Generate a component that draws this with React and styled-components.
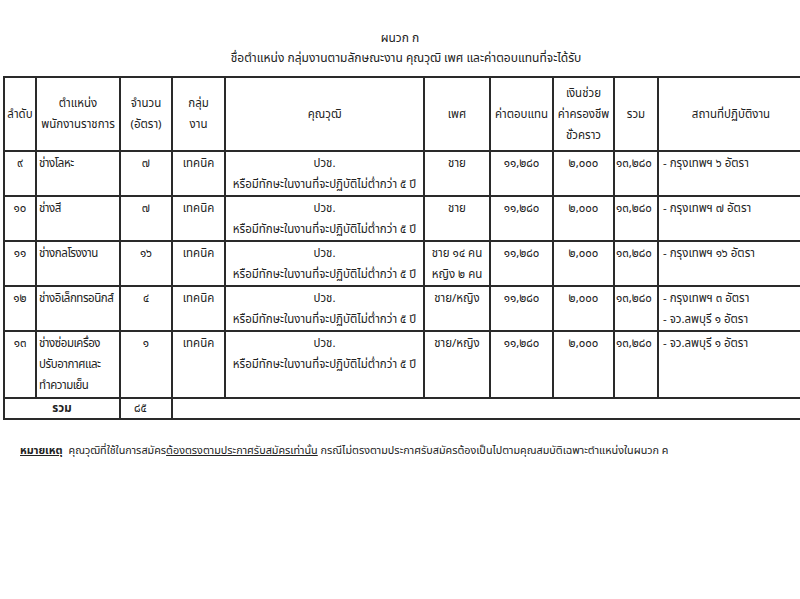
import React from "react";
import styled, { createGlobalStyle } from "styled-components";

const Global = createGlobalStyle`
  html, body { margin: 0; padding: 0; background: #fff; }
  body { font-family: "Noto Sans Thai", "Tahoma", "DejaVu Sans", "Noto Sans", sans-serif; color: #222; }
`;

const Page = styled.div`
  width: 800px;
  height: 599px;
  overflow: hidden;
  background: #fff;
  padding-top: 28px;
  box-sizing: border-box;
`;

const Title = styled.div`
  text-align: center;
  font-size: 12px;
  line-height: 20px;
  padding-left: ${(p) => p.$shift || 0}px;
`;

const Table = styled.table`
  margin-top: 8px;
  margin-left: 3px;
  width: 800px;
  border-collapse: collapse;
  table-layout: fixed;
  font-size: 11.5px;
  line-height: 21px;
`;

const Th = styled.th`
  border: 2px solid #2a2a2a;
  font-weight: normal;
  text-align: center;
  vertical-align: middle;
  height: 72px;
  padding: 0 2px;
  white-space: nowrap;
`;

const Td = styled.td`
  border: 2px solid #2a2a2a;
  vertical-align: top;
  text-align: ${(p) => p.$align || "center"};
  padding: 1px ${(p) => p.$pad ?? 2}px 0;
  white-space: nowrap;
  overflow: hidden;
  letter-spacing: ${(p) => (p.$tight ? "-0.45px" : "normal")};
  font-weight: ${(p) => (p.$bold ? "bold" : "normal")};
`;

const TallRow = styled.tr`
  td { padding-bottom: ${(p) => p.$extra || 0}px; }
`;

const TotalRow = styled.tr`
  line-height: 18px;
`;

const Note = styled.p`
  margin: 23px 0 0 20px;
  font-size: 10.8px;
  line-height: 16px;
`;

const NoteLabel = styled.span`
  font-weight: bold;
  text-decoration: underline;
  margin-right: 6px;
`;

const U = styled.span`
  text-decoration: underline;
`;

const widths = [32, 84, 52, 53, 199, 66, 63, 61, 44, 146];

const rows = [
  { no: "๙", pos: ["ช่างโลหะ"], n: "๗", sex: ["ชาย"], place: ["- กรุงเทพฯ ๖ อัตรา"] },
  { no: "๑๐", pos: ["ช่างสี"], n: "๗", sex: ["ชาย"], place: ["- กรุงเทพฯ ๗ อัตรา"] },
  { no: "๑๑", pos: ["ช่างกลโรงงาน"], n: "๑๖", sex: ["ชาย ๑๔ คน", "หญิง ๒ คน"], place: ["- กรุงเทพฯ ๑๖ อัตรา"] },
  { no: "๑๒", pos: ["ช่างอิเล็กทรอนิกส์"], n: "๔", sex: ["ชาย/หญิง"], place: ["- กรุงเทพฯ ๓ อัตรา", "- จว.ลพบุรี ๑ อัตรา"] },
  { no: "๑๓", pos: ["ช่างซ่อมเครื่อง", "ปรับอากาศและ", "ทำความเย็น"], n: "๑", sex: ["ชาย/หญิง"], place: ["- จว.ลพบุรี ๑ อัตรา"], extra: 1 },
];

const Lines = ({ items }) =>
  items.map((t, i) => (
    <React.Fragment key={i}>
      {i > 0 && <br />}
      {t}
    </React.Fragment>
  ));

export default function App() {
  return (
    <Page>
      <Global />
      <Title>ผนวก ก</Title>
      <Title $shift={12}>ชื่อตำแหน่ง กลุ่มงานตามลักษณะงาน คุณวุฒิ เพศ และค่าตอบแทนที่จะได้รับ</Title>
      <Table>
        <colgroup>
          {widths.map((w, i) => (
            <col key={i} style={{ width: w }} />
          ))}
        </colgroup>
        <thead>
          <tr>
            <Th>ลำดับ</Th>
            <Th>ตำแหน่ง<br />พนักงานราชการ</Th>
            <Th>จำนวน<br />(อัตรา)</Th>
            <Th>กลุ่ม<br />งาน</Th>
            <Th>คุณวุฒิ</Th>
            <Th>เพศ</Th>
            <Th>ค่าตอบแทน</Th>
            <Th>เงินช่วย<br />ค่าครองชีพ<br />ชั่วคราว</Th>
            <Th>รวม</Th>
            <Th>สถานที่ปฏิบัติงาน</Th>
          </tr>
        </thead>
        <tbody>
          {rows.map((r) => (
            <TallRow key={r.no} $extra={r.extra}>
              <Td>{r.no}</Td>
              <Td $align="left" $tight><Lines items={r.pos} /></Td>
              <Td>{r.n}</Td>
              <Td>เทคนิค</Td>
              <Td>ปวช.<br />หรือมีทักษะในงานที่จะปฏิบัติไม่ต่ำกว่า ๕ ปี</Td>
              <Td><Lines items={r.sex} /></Td>
              <Td>๑๑,๒๘๐</Td>
              <Td>๒,๐๐๐</Td>
              <Td $align="left" $pad={1}>๑๓,๒๘๐</Td>
              <Td $align="left" $pad={4}><Lines items={r.place} /></Td>
            </TallRow>
          ))}
          <TotalRow>
            <Td colSpan={2} $bold>รวม</Td>
            <Td $align="left" $pad={13}>๘๕</Td>
            <Td colSpan={7} />
          </TotalRow>
        </tbody>
      </Table>
      <Note>
        <NoteLabel>หมายเหตุ</NoteLabel>
        คุณวุฒิที่ใช้ในการสมัคร<U>ต้องตรงตามประกาศรับสมัครเท่านั้น</U> กรณีไม่ตรงตามประกาศรับสมัครต้องเป็นไปตามคุณสมบัติเฉพาะตำแหน่งในผนวก ค
      </Note>
    </Page>
  );
}
